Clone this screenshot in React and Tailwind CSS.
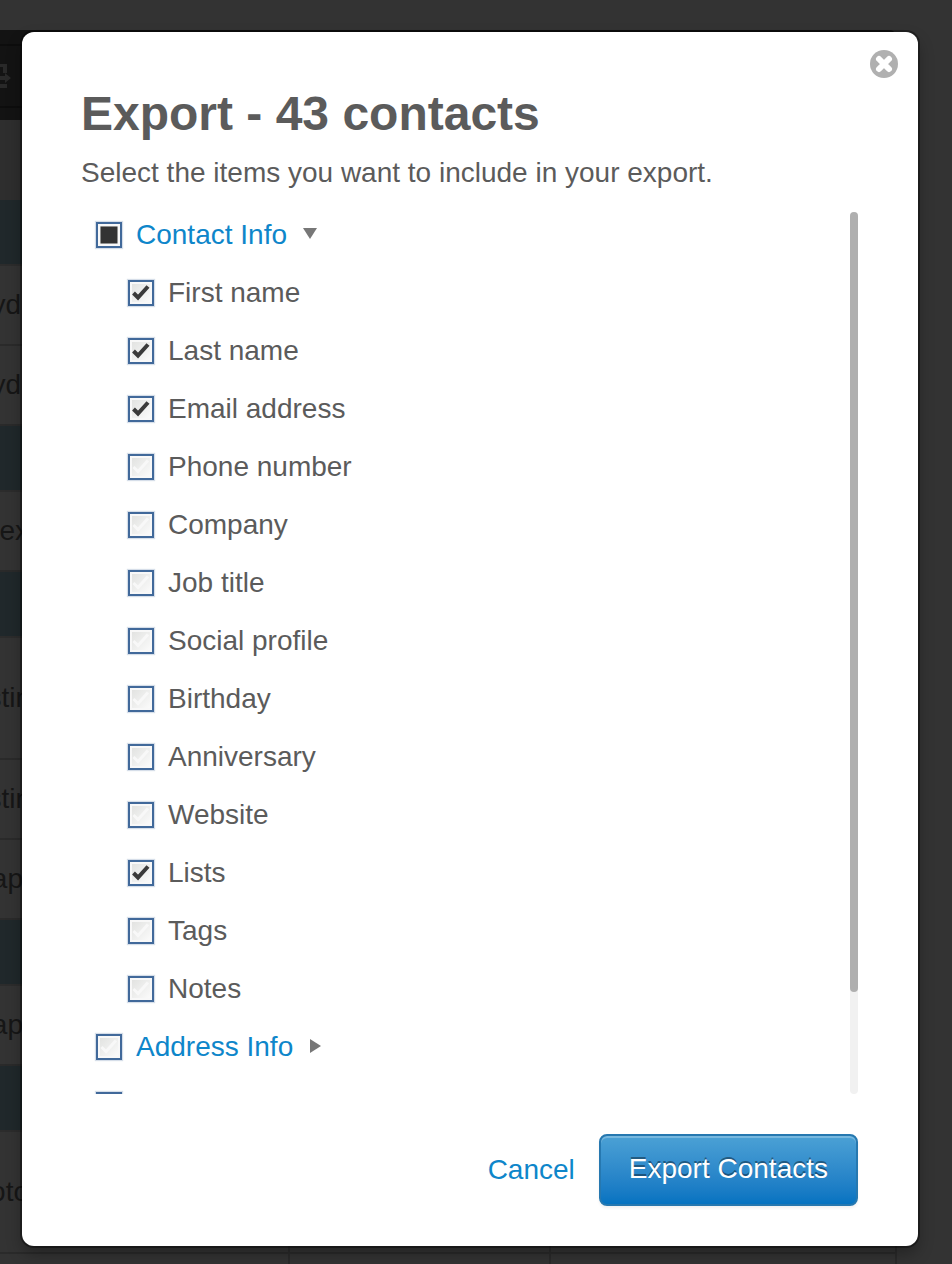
import { useState } from 'react';
import clsx from 'clsx';

const contactFields = [
  { id: 'first-name', label: 'First name', checked: true },
  { id: 'last-name', label: 'Last name', checked: true },
  { id: 'email', label: 'Email address', checked: true },
  { id: 'phone', label: 'Phone number' },
  { id: 'company', label: 'Company' },
  { id: 'job-title', label: 'Job title' },
  { id: 'social', label: 'Social profile' },
  { id: 'birthday', label: 'Birthday' },
  { id: 'anniversary', label: 'Anniversary' },
  { id: 'website', label: 'Website' },
  { id: 'lists', label: 'Lists', checked: true },
  { id: 'tags', label: 'Tags' },
  { id: 'notes', label: 'Notes' },
];

const tableRows = [
  { group: true },
  { text: 'yd', width: 'w-[21px]' },
  { text: 'yd', width: 'w-[21px]' },
  { group: true },
  { text: 'ex', width: 'w-[29px]' },
  { group: true },
  { text: 'stin', width: 'w-[31px]', tall: true },
  { text: 'stin', width: 'w-[31px]' },
  { text: 'ap', width: 'w-[23px]' },
  { group: true },
  { text: 'ap', width: 'w-[23px]' },
  { group: true },
  { text: 'oto', width: 'w-[29px]', tall: true },
  { text: '', width: 'w-[29px]' },
];

const ContactsPage = () => (
  <div className="absolute inset-0 overflow-hidden pt-[30px] pr-[55px]" aria-hidden="true">
    <div className="flex h-[90px] flex-col overflow-hidden rounded-tr-lg bg-[#131313]">
      <div className="h-4 border-b-2 border-[#0d0d0d]" />
      <div className="flex flex-1 items-center">
        <svg className="h-8 w-3" viewBox="0 0 12 32" fill="none">
          <path d="M0 4H7V13H3V7H0Z" fill="#292929" />
          <path d="M0 16H5V13L11 18L5 23V20H0Z" fill="#292929" />
          <path d="M0 24H7V28H0Z" fill="#292929" />
        </svg>
      </div>
      <div className="h-[14px] border-t-2 border-[#0d0d0d]" />
    </div>
    <div className="h-20 bg-[#2e2e2e]" />
    <table className="w-full table-fixed border-separate border-spacing-0 text-[28px] text-[#161616]">
      <colgroup>
        <col className="w-[290px]" />
        <col className="w-[261px]" />
        <col />
      </colgroup>
      <tbody>
        {tableRows.map((row, idx) =>
          row.group ? (
            <tr key={idx} className="h-[66px]">
              <td colSpan={3} className="border-b-2 border-[#2c2c2c] bg-[#20282b] p-0" />
            </tr>
          ) : (
            <tr key={idx} className={row.tall ? 'h-[122px]' : 'h-20'}>
              <td className="border-r-2 border-b-2 border-[#2a2a2a] p-0">
                <div className={clsx('flex justify-end overflow-hidden leading-8', row.width)}>{row.text}</div>
              </td>
              <td className="border-r-2 border-b-2 border-[#2a2a2a] p-0" />
              <td className="border-r-2 border-b-2 border-[#2a2a2a] p-0" />
            </tr>
          )
        )}
      </tbody>
    </table>
  </div>
);

const Checkbox = ({ id, checked, partial, onChange, label }) => (
  <span className="grid size-[26px] shrink-0">
    <input
      id={id}
      type="checkbox"
      aria-label={label}
      checked={checked}
      onChange={onChange}
      className="col-start-1 row-start-1 size-[26px] appearance-none border-2 border-[#41699a] bg-linear-to-br from-[#dfe0de] to-[#fdfdfd] shadow-[0_0_1px_1px_rgba(52,92,143,0.2),inset_0_0_0_2px_#f8f8f8]"
    />
    <svg className="pointer-events-none col-start-1 row-start-1 size-[26px]" viewBox="0 0 26 26" fill="none">
      {partial ? (
        <rect x="4.500" y="4.500" width="17" height="17" fill="#333" />
      ) : (
        <path
          d="M5.500 13L10 17.500L20 6.500"
          stroke={checked ? '#3a3a3a' : '#f8f8f8'}
          strokeWidth={checked ? 4 : 3}
        />
      )}
    </svg>
  </span>
);

const GroupRow = ({ id, label, open, checked, partial, onToggle, onChange }) => (
  <div className="flex h-[46px] shrink-0 items-center gap-[14px] pl-[15px]">
    <Checkbox id={id} label={label} checked={checked} partial={partial} onChange={onChange} />
    <button type="button" onClick={onToggle} className="flex items-center gap-4 text-[#0e86ca]">
      {label}
      <svg className="size-4" viewBox="0 0 16 16" fill="#777">
        {open ? <path d="M0 1H14L7 12Z" /> : <path d="M1 0L12 7L1 14Z" />}
      </svg>
    </button>
  </div>
);

export default function App() {
  const [fields, setFields] = useState(contactFields);
  const [open, setOpen] = useState(true);
  const [address, setAddress] = useState(false);
  const [custom, setCustom] = useState(false);

  const allChecked = fields.every((f) => f.checked);
  const someChecked = fields.some((f) => f.checked) && !allChecked;

  const toggleField = (id) => {
    setFields(fields.map((f) => (f.id === id ? { ...f, checked: !f.checked } : f)));
  };

  return (
    <div className="relative min-h-screen overflow-hidden bg-[#333] font-['Liberation_Sans',Arial,sans-serif]">
      <ContactsPage />

      <div className="relative pt-8 pr-[34px] pb-[18px] pl-[22px]">
        <div
          role="dialog"
          aria-labelledby="export-title"
          className="relative rounded-xl bg-white pt-[52px] pr-[60px] pb-10 pl-[59px] text-[28px] leading-8 text-[#5b5b5b] shadow-[0_0_0_2px_rgba(0,0,0,0.35),0_8px_16px_rgba(0,0,0,0.3)]"
        >
          <button type="button" aria-label="Close" className="absolute top-[18px] right-5">
            <svg className="size-7" viewBox="0 0 28 28" fill="none">
              <circle cx="14" cy="14" r="14" fill="#b0b0b0" />
              <path d="M9 9L19 19M19 9L9 19" stroke="#fff" strokeWidth="6" strokeLinecap="round" />
            </svg>
          </button>

          <h1 id="export-title" className="text-5xl leading-[60px] font-bold">Export - 43 contacts</h1>
          <p className="mt-[13px]">Select the items you want to include in your export.</p>

          <div className="mt-[23px] flex h-[882px]">
            <div className="flex flex-1 flex-col gap-3 overflow-hidden">
              <GroupRow
                id="contact-info"
                label="Contact Info"
                open={open}
                checked={allChecked}
                partial={someChecked}
                onToggle={() => setOpen(!open)}
                onChange={() => setFields(fields.map((f) => ({ ...f, checked: !allChecked })))}
              />
              {open && fields.map((field) => (
                <div key={field.id} className="flex h-[46px] shrink-0 items-center gap-[14px] pl-[47px]">
                  <Checkbox id={field.id} checked={!!field.checked} onChange={() => toggleField(field.id)} />
                  <label htmlFor={field.id}>{field.label}</label>
                </div>
              ))}
              <GroupRow id="address-info" label="Address Info" checked={address} onChange={() => setAddress(!address)} />
              <GroupRow id="custom-fields" label="Custom Fields" checked={custom} onChange={() => setCustom(!custom)} />
            </div>
            <div className="w-2 rounded-full bg-[#f1f1f1]">
              <div className="h-[780px] rounded-full bg-[#afafaf]" />
            </div>
          </div>

          <div className="mt-10 flex items-center justify-end gap-6">
            <button type="button" className="text-[#0e86ca]">Cancel</button>
            <button
              type="button"
              className="h-[72px] rounded-lg border-2 border-[#2678b0] bg-linear-to-b from-[#4ba1d5] to-[#0473c1] px-7 pb-[2px] text-white shadow-[inset_0_2px_0_rgba(255,255,255,0.25),0_2px_3px_rgba(0,0,0,0.06)] text-shadow-[0_-2px_0_rgba(0,0,0,0.4)]"
            >
              Export Contacts
            </button>
          </div>
        </div>
      </div>
    </div>
  );
}
